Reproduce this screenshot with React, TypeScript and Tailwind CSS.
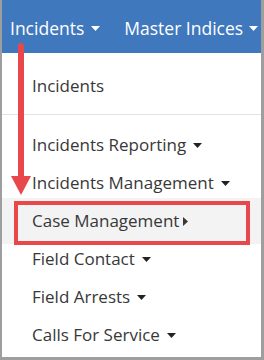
import React from 'react';

function CaretDown({ className = '' }: { className?: string }) {
    return (
        <svg width="9" height="5" viewBox="0 0 9 5" className={className}>
            <path d="M0 0 H9 L4.5 5 Z" fill="currentColor" />
        </svg>
    );
}

function CaretRight() {
    return (
        <svg width="5" height="9" viewBox="0 0 5 9">
            <path d="M0 0 L5 4.5 L0 9 Z" fill="currentColor" />
        </svg>
    );
}

export default function App() {
    const items = [
        { label: 'Incidents Reporting' },
        { label: 'Incidents Management' },
        { label: 'Case Management', active: true },
        { label: 'Field Contact' },
        { label: 'Field Arrests' },
        { label: 'Calls For Service' },
    ];

    return (
        <div
            className="relative w-[264px] h-[360px] overflow-hidden bg-white border-l-2 border-r-[3px] border-b-[3px] border-[#9e9e9e]"
            style={{ fontFamily: '"Open Sans", "Noto Sans", sans-serif' }}
        >
            {/* top nav */}
            <div className="h-[53px] bg-[#4078bd] flex items-center pl-[8px] text-white text-[17.5px] pt-[3px] whitespace-nowrap">
                <span className="flex items-center gap-[7px]">
                    Incidents
                    <CaretDown />
                </span>
                <span className="flex items-center gap-[6px] ml-[24px]">
                    Master Indices
                    <CaretDown />
                </span>
            </div>

            {/* dropdown */}
            <div className="text-[#383838] text-[17px] pt-[14px] whitespace-nowrap">
                <div className="h-[38px] flex items-center pl-[30px]">Incidents</div>
                <div className="h-px bg-[#e3e3e3] mt-[9px] mb-[11px]" />
                {items.map((it, i) =>
                    it.active ? (
                        <div
                            key={i}
                            className="relative h-[46px] -my-[4px] flex items-center pl-[30px] gap-[4px] bg-[#f3f3f3]"
                        >
                            {it.label}
                            <CaretRight />
                            <div className="absolute left-[12px] w-[236px] top-[3px] bottom-[-1px] border-[4px] border-[#e8474b]" />
                        </div>
                    ) : (
                        <div key={i} className="h-[38px] flex items-center pl-[30px] gap-[7px]">
                            {it.label}
                            <CaretDown className="text-[#222]" />
                        </div>
                    )
                )}
            </div>

            {/* annotation arrow */}
            <svg className="absolute left-0 top-0" width="40" height="200" viewBox="0 0 40 200">
                <line x1="19" y1="46" x2="19" y2="178" stroke="#e8474b" strokeWidth="6" strokeLinecap="round" />
                <path d="M9 176 H29 L19 195 Z" fill="#e8474b" />
            </svg>
        </div>
    );
}
